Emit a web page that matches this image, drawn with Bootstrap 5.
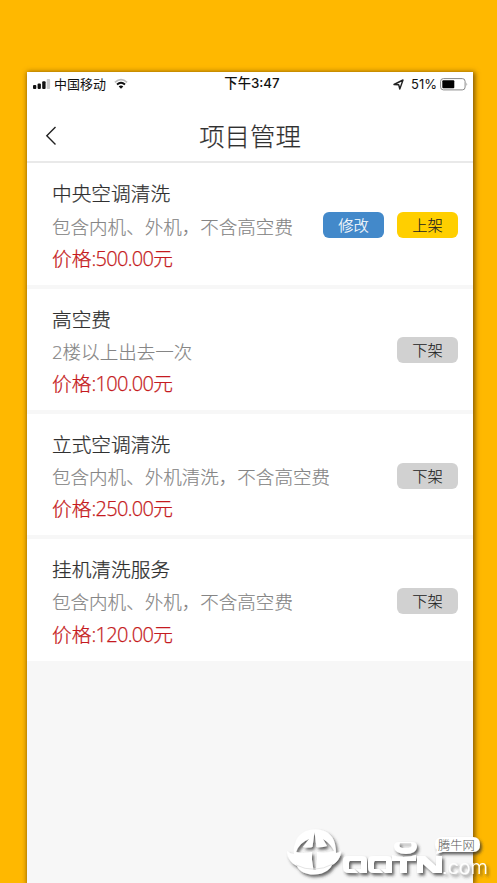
<!DOCTYPE html>
<html lang="zh-CN">
<head>
<meta charset="utf-8">
<meta name="viewport" content="width=device-width, initial-scale=1">
<title>项目管理</title>
<link href="https://cdn.jsdelivr.net/npm/bootstrap@5.3.0/dist/css/bootstrap.min.css" rel="stylesheet">
<style>
body{background:#ffb800;font-family:"Open Sans","Noto Sans CJK SC",sans-serif;font-weight:300;color:#303030;height:883px}
.phone{width:446px;height:811px;margin:72px 0 0 27px;background:#f7f7f7;box-shadow:1px 1px 5px 1px rgba(90,55,0,.75)}
.statusbar{height:24px;grid-template-columns:1fr auto 1fr;font:400 13px/23px Inter,"Noto Sans CJK SC",sans-serif;color:#111;padding:0 5px 0 6px}
.statusbar .clock{font-weight:500;font-size:13.3px;padding-left:3px}
.carrier{margin-left:3px}
.percent{margin:0 3px 0 7px}
.appbar{height:67px;border-bottom:2px solid #e9e9e9;padding-top:10px}
.appbar h1{font-size:25.4px;font-weight:300;line-height:60px;margin:0;-webkit-text-stroke:.2px}
.back{left:18px;top:30px}
.service{height:121.3px;margin-bottom:4px;padding:15px 15px 0 25px}
.service-list{padding-top:.4px}
.service h2{font-size:19.7px;font-weight:300;line-height:32.2px;margin:0;-webkit-text-stroke:.25px}
.desc{font-size:18.55px;line-height:32.2px;color:#858585;white-space:nowrap;-webkit-text-stroke:.15px}
.price{font-size:19.7px;line-height:32.2px;color:#c51a20;-webkit-text-stroke:.25px}
.price span{font-size:20px;letter-spacing:-.69px}
.tag{width:61px;height:26px;border-radius:6px;padding:0;border:0;font-size:15.3px;line-height:26px;font-weight:300;color:#222;-webkit-text-stroke:.15px}
.blue{background:#4389ca;color:#fff}.gold{background:#ffcf00}.grey{background:#d1d1d1}
.actions{gap:13px;padding-bottom:13px}
.watermark{left:284px;top:820px}
</style>
</head>
<body class="overflow-hidden position-relative">
<main class="phone overflow-hidden">
 <header class="bg-white">
  <div class="statusbar d-grid">
   <div class="d-flex align-items-center">
    <svg width="18" height="12" viewBox="0 0 18 12"><g fill="#111"><rect x="0" y="7" width="3.3" height="4" rx="1"/><rect x="4.6" y="5.5" width="3.3" height="5.500" rx="1"/><rect x="9.200" y="3.300" width="3.400" height="7.700" rx="1"/></g><rect x="13.700" y="1" width="3.400" height="10" rx="1" fill="#c9c9c9"/></svg>
    <span class="carrier">中国移动</span>
    <svg class="ms-2" width="14" height="12" viewBox="0 0 15 12" fill="none"><path d="M1 4.200Q7.500-1.500 14 4.200" stroke="#bbb" stroke-width="1.900"/><path d="M3.200 6.600Q7.500 2.700 11.800 6.600" stroke="#111" stroke-width="2"/><path d="M5 8.800Q7.500 6.500 10 8.800L7.500 11.200Z" fill="#111"/></svg>
   </div>
   <div class="clock">下午3:47</div>
   <div class="d-flex align-items-center justify-content-end">
    <svg width="11" height="11" viewBox="0 0 11 11"><path d="M1 5.500L10 1L6.800 10L5.700 5.800Z" fill="none" stroke="#222" stroke-width="1.400" stroke-linejoin="round"/></svg>
    <span class="percent">51%</span>
    <svg width="28" height="13" viewBox="0 0 28 13"><rect x=".6" y=".6" width="24.500" height="11.300" rx="2.800" fill="none" stroke="#888"/><rect x="2.300" y="2.300" width="12" height="7.900" rx="1" fill="#000"/><path d="M26.500 4.500Q28 6.200 26.500 8Z" fill="#888"/></svg>
   </div>
  </div>
  <div class="appbar position-relative text-center">
   <svg class="back position-absolute" width="13" height="20" viewBox="0 0 13 20"><path d="M10.500 1L1.800 9.700L10.500 18.500" fill="none" stroke="#222" stroke-width="1.400"/></svg>
   <h1>项目管理</h1>
  </div>
 </header>
 <section class="service-list">
  <article class="service bg-white d-flex justify-content-between">
   <div><h2>中央空调清洗</h2><div class="desc">包含内机、外机，不含高空费</div><div class="price">价格<span>:500.00</span>元</div></div>
   <div class="actions d-flex align-items-center"><button class="tag btn blue">修改</button><button class="tag btn gold">上架</button></div>
  </article>
  <article class="service bg-white d-flex justify-content-between">
   <div><h2>高空费</h2><div class="desc">2楼以上出去一次</div><div class="price">价格<span>:100.00</span>元</div></div>
   <div class="actions d-flex align-items-center"><button class="tag btn grey">下架</button></div>
  </article>
  <article class="service bg-white d-flex justify-content-between">
   <div><h2>立式空调清洗</h2><div class="desc">包含内机、外机清洗，不含高空费</div><div class="price">价格<span>:250.00</span>元</div></div>
   <div class="actions d-flex align-items-center"><button class="tag btn grey">下架</button></div>
  </article>
  <article class="service bg-white d-flex justify-content-between">
   <div><h2>挂机清洗服务</h2><div class="desc">包含内机、外机，不含高空费</div><div class="price">价格<span>:120.00</span>元</div></div>
   <div class="actions d-flex align-items-center"><button class="tag btn grey">下架</button></div>
  </article>
 </section>
</main>
<svg class="watermark position-absolute" width="213" height="63" viewBox="0 0 213 63">
 <defs><filter id="shade" x="-10%" y="-10%" width="120%" height="130%"><feDropShadow dx="2" dy="2.500" stdDeviation="1.800" flood-color="#333" flood-opacity=".75"/></filter></defs>
 <g filter="url(#shade)" fill="#fff">
  <path fill-rule="evenodd" d="M11 24C15 5 47 4 51 24Q52 29 52 33Q55 33 57 31C57 37 53 43 48 45C43 57 18 58 13 46C7 43 3 38 3 31Q6 34 10 34Q9 28 11 24ZM30.500 12L28.500 27Q24 28 19 27L25 19Q15 23 12 32Q20 34 28 32L28 40L29.500 50L32 50L33 40L33 32Q41 34 50 31Q47 24 39 19L43 26Q37 28 32.500 27Z"/>
  <path d="M12 45Q30 54 49 44" fill="none" stroke="#ddd" stroke-width=".8"/>
  <path fill-rule="evenodd" d="M64 36H78Q83 36 83 41V53H76L72 49H77V41H66Q65 41 65 43V49H70L74 53H65Q59 53 59 47V41Q59 36 64 36Z"/>
  <path fill-rule="evenodd" d="M89 36H103Q108 36 108 41V53H101L97 49H102V41H91Q90 41 90 43V49H95L99 53H90Q84 53 84 47V41Q84 36 89 36Z"/>
  <path d="M108 35Q120 39 132 35V41H123V53H116V41H108ZM133 53V36H141L152 46V36H158V53H149L139 44V53Z"/>
  <path fill-rule="evenodd" d="M115 22H128Q133 22 133 27Q132 34 122 34Q111 34 110 27Q110 22 115 22ZM116 23Q114 27 118 28H125Q129 27 127 23Z"/>
  <path d="M158.500 17H189Q196 17 196 24.500Q196 32 189 32H158.500L152 34L153 30Q151 28 151 24.500Q151 17 158.500 17Z"/>
  <text x="158" y="53.500" font-family="Inter, sans-serif" font-size="20" font-weight="300" textLength="46" lengthAdjust="spacingAndGlyphs">.com</text>
 </g>
 <text x="154" y="30" font-family="Noto Sans CJK SC, sans-serif" font-size="12.300" fill="#555">腾牛网</text>
</svg>
<script src="https://cdn.jsdelivr.net/npm/bootstrap@5.3.0/dist/js/bootstrap.bundle.min.js"></script>
</body>
</html>
